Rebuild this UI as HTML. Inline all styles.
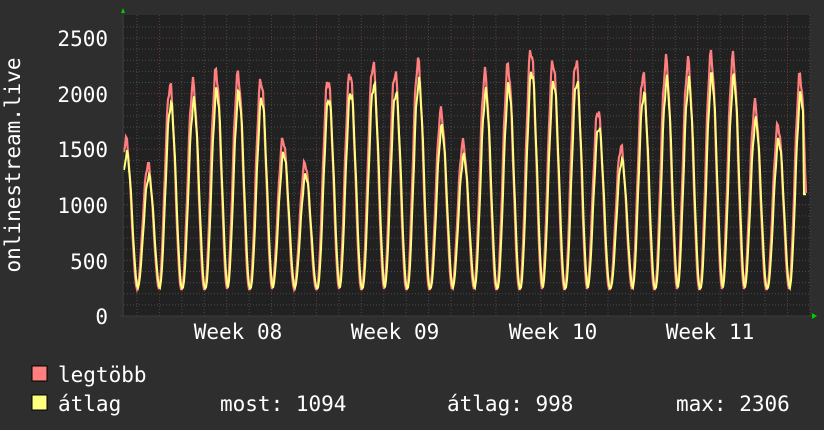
<!DOCTYPE html>
<html><head><meta charset="utf-8"><style>
html,body{margin:0;padding:0;background:#2e2e2e;width:824px;height:430px;overflow:hidden}
svg{display:block}
text{font-family:"DejaVu Sans Mono","Liberation Mono",monospace;fill:#fff}
</style></head><body>
<svg id="g" width="824" height="430" xmlns="http://www.w3.org/2000/svg">
<rect x="0" y="0" width="824" height="430" fill="#2e2e2e"/>
<rect x="124" y="15" width="686" height="301" fill="#212121"/>
<g id="grid"></g>
<g id="data"></g>
<line x1="123" y1="13" x2="123" y2="318" stroke="#3a3a3a"/>
<line x1="120" y1="316" x2="812" y2="316" stroke="#3a3a3a"/>
<polygon points="121,13 125,13 123,8" fill="#00cc00"/>
<polygon points="812,313 812,319 817,316" fill="#00cc00"/>
<g font-size="21" text-anchor="end">
<text x="108" y="46">2500</text>
<text x="108" y="102">2000</text>
<text x="108" y="157">1500</text>
<text x="108" y="213">1000</text>
<text x="108" y="269">500</text>
<text x="108" y="324">0</text>
</g>
<text transform="translate(20,165) rotate(-90)" font-size="21" text-anchor="middle">onlinestream.live</text>
<g font-size="21" text-anchor="middle">
<text x="238" y="339">Week 08</text>
<text x="395" y="339">Week 09</text>
<text x="553" y="339">Week 10</text>
<text x="710" y="339">Week 11</text>
</g>
<rect x="32" y="366" width="15" height="15" fill="#ff7f7f" stroke="#000"/>
<rect x="32" y="395" width="15" height="15" fill="#ffff7f" stroke="#000"/>
<g font-size="21">
<text x="58" y="382">legtöbb</text>
<text x="58" y="411">átlag</text>
<text x="220" y="411">most: 1094</text>
<text x="447" y="411">átlag: 998</text>
<text x="676" y="411">max: 2306</text>
</g>
</svg>
<script>
function Y(v){return 316-v*0.1112;}
var grid=document.getElementById('grid'),h='';
for(var v=100;v<=2600;v+=100){var y=Y(v);if(y<15)break;var maj=v%500==0;
h+='<line x1="124" x2="810" y1="'+y+'" y2="'+y+'" stroke="'+(maj?'#6a3a3a':'#4a4a4a')+'" stroke-dasharray="1,2"/>';}
for(var i=0;i<32;i++){var x=137+i*22.43;if(x>810)break;var maj=Math.abs(((x-159)%157))<2;
h+='<line y1="15" y2="316" x1="'+x+'" x2="'+x+'" stroke="'+(maj?'#6a3a3a':'#4a4a4a')+'" stroke-dasharray="1,2"/>';}
grid.innerHTML=h;
var px=[126,148,170,193,216,238,261,283,305,328,350,373,395,418,441,463,485,508,531,553,576,598,621,643,666,688,711,733,755,778,800];
var pk=[1630,1400,2130,2150,2260,2230,2180,1630,1410,2190,2250,2330,2250,2350,1890,1600,2240,2310,2460,2350,2360,1900,1560,2230,2360,2350,2410,2390,1960,1760,2220];
function val(x,scale,base){var bi=0,bd=1e9;for(var i=0;i<px.length;i++){var d=Math.abs(x-px[i]);if(d<bd){bd=d;bi=i;}}
var d=(x-px[bi])/22.43;var f=Math.pow((1+Math.cos(d*2*Math.PI))/2,1.0);var n=0.97+0.03*Math.sin(x*1.7);return base+(pk[bi]*scale-base)*f*n;}
var r='',yy='';
for(var x=124;x<=806;x++){r+=(x==124?'M':'L')+x+','+Y(val(x,1,240)).toFixed(1);}
for(var x=124;x<=806;x++){var v=val(x-0.8,0.92,250);if(x>=804)v=1094;yy+=(x==124?'M':'L')+x+','+Y(v).toFixed(1);}
document.getElementById('data').innerHTML='<path d="'+r+'" fill="none" stroke="#ff7f7f" stroke-width="2.2"/><path d="'+yy+'" fill="none" stroke="#ffff7f" stroke-width="2"/>';
</script>
</body></html>
